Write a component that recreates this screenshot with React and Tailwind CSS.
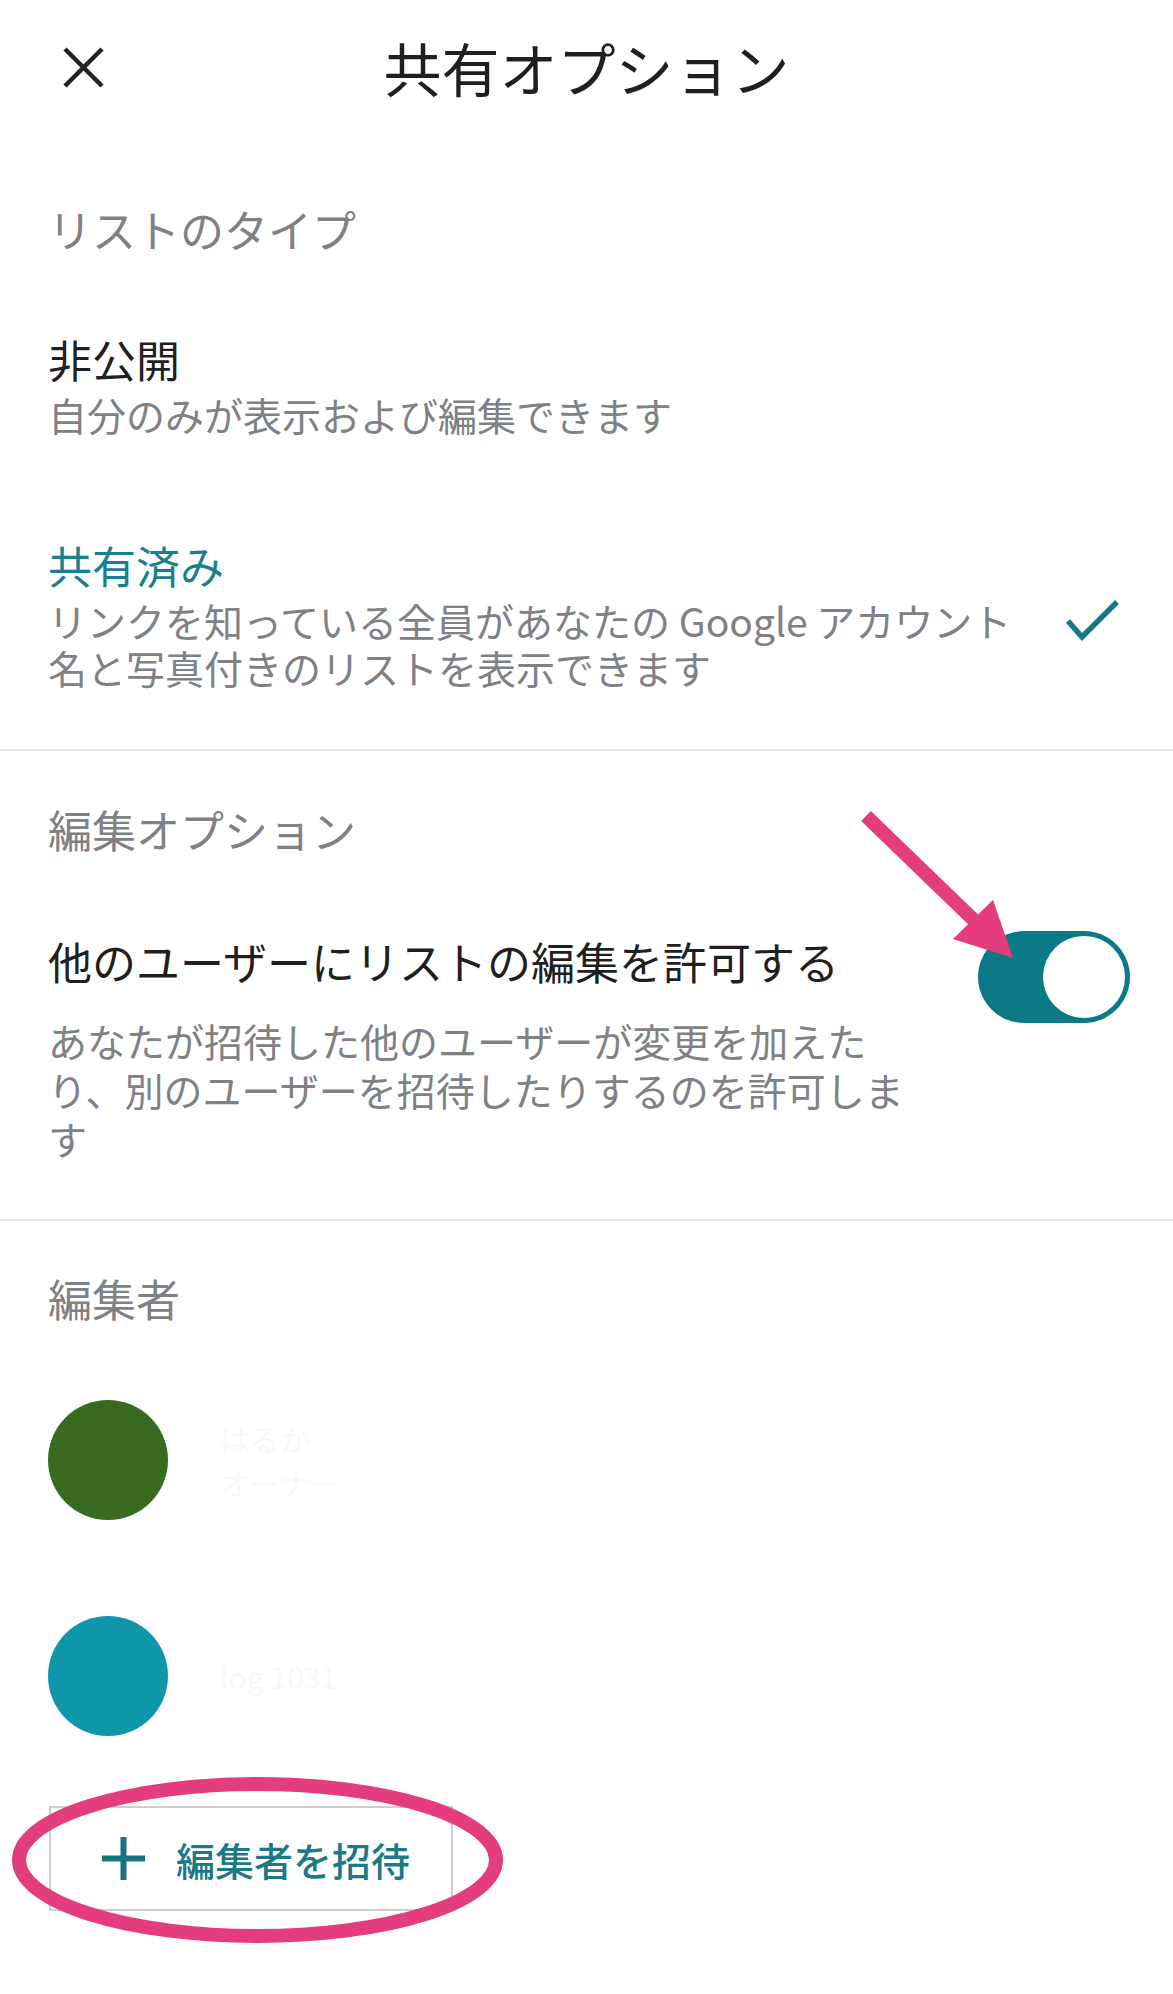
import React from 'react';

const FONT = "font-['Noto_Sans_CJK_JP','Noto_Sans_CJK_SC',sans-serif]";

function CloseIcon() {
  return (
    <svg width="41" height="41" viewBox="0 0 41 41" fill="none">
      <path d="M2 2L39 39M39 2L2 39" stroke="#222" strokeWidth="4.5" />
    </svg>
  );
}

function CheckIcon() {
  return (
    <svg width="56" height="44" viewBox="0 0 56 44" fill="none">
      <path d="M3 23L17 39L52 4" stroke="#137a85" strokeWidth="5.5" strokeLinejoin="miter" />
    </svg>
  );
}

function Toggle() {
  return (
    <div className="w-[152px] h-[92px] rounded-full bg-[#0b7a86] flex items-center justify-end p-[5px] shrink-0 -mt-[4px]">
      <div className="w-[82px] h-[82px] rounded-full bg-white" />
    </div>
  );
}

function Editor({ color, lines, mt }) {
  return (
    <div className={`flex items-center gap-[52px] ${mt}`}>
      <div className="w-[120px] h-[120px] rounded-full shrink-0" style={{ backgroundColor: color }} />
      <div className="text-[30px] leading-[44px] text-[#f8f8f8]">
        {lines.map((l) => (
          <div key={l}>{l}</div>
        ))}
      </div>
    </div>
  );
}

function Annotations() {
  return (
    <svg className="absolute inset-0 pointer-events-none" width="1173" height="1994" viewBox="0 0 1173 1994" fill="none">
      <line x1="866" y1="816" x2="982" y2="928" stroke="#e43d7e" strokeWidth="14" />
      <polygon points="953,939 993,900 1013,958" fill="#e43d7e" />
      <ellipse cx="257.5" cy="1860" rx="238.5" ry="76" stroke="#e43d7e" strokeWidth="14" />
    </svg>
  );
}

export default function App() {
  return (
    <div className={`relative w-[1173px] h-[1994px] bg-white overflow-hidden ${FONT}`}>
      <header className="h-[134px] grid grid-cols-[1fr_auto_1fr] items-center">
        <div className="pl-[63px] flex items-center">
          <CloseIcon />
        </div>
        <h1 className="text-[58px] leading-[70px] text-[#1f1f1f] font-normal">共有オプション</h1>
        <div />
      </header>

      <section className="px-[48px]">
        <div className="mt-[67px] text-[44px] leading-[56px] text-[#808185]">リストのタイプ</div>

        <div className="mt-[76px] text-[44px] leading-[52px] text-[#1f1f1f]">非公開</div>
        <div className="mt-[5px] text-[39px] leading-[48px] text-[#808185]">自分のみが表示および編集できます</div>

        <div className="mt-[101px] text-[44px] leading-[52px] text-[#17808c]">共有済み</div>
        <div className="mt-[6px] flex items-start justify-between pr-[2px]">
          <div className="text-[39px] leading-[47px] text-[#808185] whitespace-nowrap">
            <div>リンクを知っている全員があなたの Google アカウント</div>
            <div>名と写真付きのリストを表示できます</div>
          </div>
          <div className="mt-[1px] mr-[2px]">
            <CheckIcon />
          </div>
        </div>
      </section>

      <div className="mt-[58px] h-[2px] bg-[#e6e6e6]" />

      <section className="px-[48px] pr-[43px]">
        <div className="mt-[50px] text-[44px] leading-[56px] text-[#808185]">編集オプション</div>
        <div className="mt-[78px] flex items-start justify-between">
          <div>
            <div className="text-[44px] leading-[52px] text-[#1f1f1f] whitespace-nowrap">他のユーザーにリストの編集を許可する</div>
            <div className="mt-[29px] text-[39px] leading-[49px] text-[#808185] whitespace-nowrap">
              <div>あなたが招待した他のユーザーが変更を加えた</div>
              <div>り、別のユーザーを招待したりするのを許可しま</div>
              <div>す</div>
            </div>
          </div>
          <Toggle />
        </div>
      </section>

      <div className="mt-[56px] h-[2px] bg-[#e6e6e6]" />

      <section className="px-[48px]">
        <div className="mt-[49px] text-[44px] leading-[56px] text-[#808185]">編集者</div>
        <Editor color="#386a20" lines={['はるか', 'オーナー']} mt="mt-[74px]" />
        <Editor color="#0f97a9" lines={['log 1031']} mt="mt-[96px]" />

        <button className="mt-[70px] ml-px w-[404px] h-[105px] border-2 border-[#cdcdcd] bg-white flex items-center pl-[51px] gap-[31px]">
          <svg width="43" height="43" viewBox="0 0 43 43" fill="none">
            <path d="M21.5 0V43M0 21.5H43" stroke="#17737e" strokeWidth="6" />
          </svg>
          <span className="text-[39px] leading-[48px] font-medium text-[#1b7a85]">編集者を招待</span>
        </button>
      </section>

      <Annotations />
    </div>
  );
}
